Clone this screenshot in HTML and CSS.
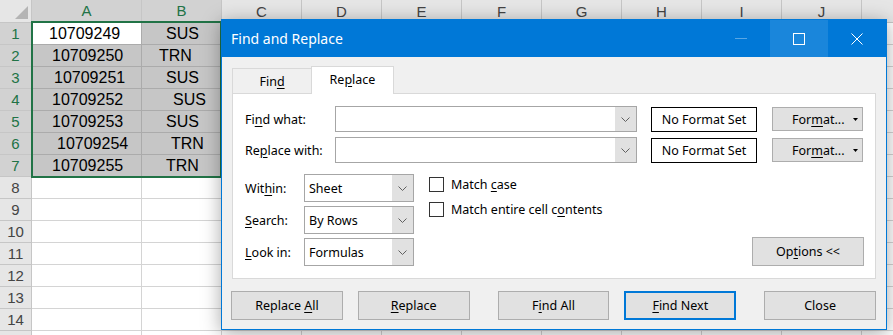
FILE: index.html
```html
<!DOCTYPE html>
<html lang="en">
<head>
  <meta charset="UTF-8" />
  <meta name="viewport" content="width=device-width, initial-scale=1.0" />
  <title>Find and Replace</title>
  <link rel="stylesheet" href="styles.css">
</head>
<body>
  <div class="sheet">
    <div class="hd corner"><svg width="13" height="13" viewBox="0 0 13 13"><path d="M0 13H13V0z" fill="#b4b4b4"/></svg></div>
    <div class="hd col sel">A</div><div class="hd col sel">B</div><div class="hd col">C</div><div class="hd col">D</div><div class="hd col">E</div><div class="hd col">F</div><div class="hd col">G</div><div class="hd col">H</div><div class="hd col">I</div><div class="hd col">J</div><div class="hd col"></div>

    <div class="hd row sel">1</div><div class="cell active i17">10709249</div><div class="cell sel i24">SUS</div><div class="cell"></div><div class="cell"></div><div class="cell"></div><div class="cell"></div><div class="cell"></div><div class="cell"></div><div class="cell"></div><div class="cell"></div><div class="cell"></div>
    <div class="hd row sel">2</div><div class="cell sel i20">10709250</div><div class="cell sel i17">TRN</div><div class="cell"></div><div class="cell"></div><div class="cell"></div><div class="cell"></div><div class="cell"></div><div class="cell"></div><div class="cell"></div><div class="cell"></div><div class="cell"></div>
    <div class="hd row sel">3</div><div class="cell sel i22">10709251</div><div class="cell sel i24">SUS</div><div class="cell"></div><div class="cell"></div><div class="cell"></div><div class="cell"></div><div class="cell"></div><div class="cell"></div><div class="cell"></div><div class="cell"></div><div class="cell"></div>
    <div class="hd row sel">4</div><div class="cell sel i20">10709252</div><div class="cell sel i31">SUS</div><div class="cell"></div><div class="cell"></div><div class="cell"></div><div class="cell"></div><div class="cell"></div><div class="cell"></div><div class="cell"></div><div class="cell"></div><div class="cell"></div>
    <div class="hd row sel">5</div><div class="cell sel i20">10709253</div><div class="cell sel i24">SUS</div><div class="cell"></div><div class="cell"></div><div class="cell"></div><div class="cell"></div><div class="cell"></div><div class="cell"></div><div class="cell"></div><div class="cell"></div><div class="cell"></div>
    <div class="hd row sel">6</div><div class="cell sel i25">10709254</div><div class="cell sel i29">TRN</div><div class="cell"></div><div class="cell"></div><div class="cell"></div><div class="cell"></div><div class="cell"></div><div class="cell"></div><div class="cell"></div><div class="cell"></div><div class="cell"></div>
    <div class="hd row sel">7</div><div class="cell sel i20">10709255</div><div class="cell sel i24">TRN</div><div class="cell"></div><div class="cell"></div><div class="cell"></div><div class="cell"></div><div class="cell"></div><div class="cell"></div><div class="cell"></div><div class="cell"></div><div class="cell"></div>
    <div class="hd row">8</div><div class="cell"></div><div class="cell"></div><div class="cell"></div><div class="cell"></div><div class="cell"></div><div class="cell"></div><div class="cell"></div><div class="cell"></div><div class="cell"></div><div class="cell"></div><div class="cell"></div>
    <div class="hd row">9</div><div class="cell"></div><div class="cell"></div><div class="cell"></div><div class="cell"></div><div class="cell"></div><div class="cell"></div><div class="cell"></div><div class="cell"></div><div class="cell"></div><div class="cell"></div><div class="cell"></div>
    <div class="hd row">10</div><div class="cell"></div><div class="cell"></div><div class="cell"></div><div class="cell"></div><div class="cell"></div><div class="cell"></div><div class="cell"></div><div class="cell"></div><div class="cell"></div><div class="cell"></div><div class="cell"></div>
    <div class="hd row">11</div><div class="cell"></div><div class="cell"></div><div class="cell"></div><div class="cell"></div><div class="cell"></div><div class="cell"></div><div class="cell"></div><div class="cell"></div><div class="cell"></div><div class="cell"></div><div class="cell"></div>
    <div class="hd row">12</div><div class="cell"></div><div class="cell"></div><div class="cell"></div><div class="cell"></div><div class="cell"></div><div class="cell"></div><div class="cell"></div><div class="cell"></div><div class="cell"></div><div class="cell"></div><div class="cell"></div>
    <div class="hd row">13</div><div class="cell"></div><div class="cell"></div><div class="cell"></div><div class="cell"></div><div class="cell"></div><div class="cell"></div><div class="cell"></div><div class="cell"></div><div class="cell"></div><div class="cell"></div><div class="cell"></div>
    <div class="hd row">14</div><div class="cell"></div><div class="cell"></div><div class="cell"></div><div class="cell"></div><div class="cell"></div><div class="cell"></div><div class="cell"></div><div class="cell"></div><div class="cell"></div><div class="cell"></div><div class="cell"></div>
    <div class="hd row"></div><div class="cell"></div><div class="cell"></div><div class="cell"></div><div class="cell"></div><div class="cell"></div><div class="cell"></div><div class="cell"></div><div class="cell"></div><div class="cell"></div><div class="cell"></div><div class="cell"></div>
  </div>

  <div class="selection"></div>

  <div class="dialog">
    <div class="titlebar">
      <span class="title">Find and Replace</span>
      <div class="winbtns">
        <span class="winbtn"><svg width="12" height="1"><rect width="12" height="1" fill="#fff" opacity=".35"/></svg></span>
        <span class="winbtn hover"><svg width="12" height="12" viewBox="0 0 12 12"><rect x=".5" y=".5" width="11" height="11" fill="none" stroke="#fff"/></svg></span>
        <span class="winbtn"><svg width="12" height="12" viewBox="0 0 12 12"><path d="M.5.5l11 11M11.5.5l-11 11" stroke="#fff" fill="none"/></svg></span>
      </div>
    </div>

    <div class="dlg-body">
      <div class="tabs">
        <span class="tab">Fin<u>d</u></span>
        <span class="tab active">Re<u>p</u>lace</span>
      </div>

      <div class="panel">
        <div class="field-row">
          <label class="field-label">Fi<u>n</u>d what:</label>
          <div class="combo wide">
            <span class="combo-value"></span>
            <span class="combo-btn"><svg width="9" height="5" viewBox="0 0 9 5"><path d="M.5.5l4 4 4-4" fill="none" stroke="#606060"/></svg></span>
          </div>
          <div class="fmt-preview">No Format Set</div>
          <button class="btn fmt-btn"><span>For<u>m</u>at...</span><svg class="caret" width="5" height="3" viewBox="0 0 5 3"><path d="M0 0h5L2.5 3z" fill="#000"/></svg></button>
        </div>
        <div class="field-row">
          <label class="field-label">Re<u>p</u>lace with:</label>
          <div class="combo wide">
            <span class="combo-value"></span>
            <span class="combo-btn"><svg width="9" height="5" viewBox="0 0 9 5"><path d="M.5.5l4 4 4-4" fill="none" stroke="#606060"/></svg></span>
          </div>
          <div class="fmt-preview">No Format Set</div>
          <button class="btn fmt-btn"><span>For<u>m</u>at...</span><svg class="caret" width="5" height="3" viewBox="0 0 5 3"><path d="M0 0h5L2.5 3z" fill="#000"/></svg></button>
        </div>

        <div class="options">
          <div class="selects">
            <div class="sel-row">
              <label class="sel-label">Wit<u>h</u>in:</label>
              <div class="combo small">
                <span class="combo-value">Sheet</span>
                <span class="combo-btn"><svg width="9" height="5" viewBox="0 0 9 5"><path d="M.5.5l4 4 4-4" fill="none" stroke="#606060"/></svg></span>
              </div>
            </div>
            <div class="sel-row">
              <label class="sel-label"><u>S</u>earch:</label>
              <div class="combo small">
                <span class="combo-value">By Rows</span>
                <span class="combo-btn"><svg width="9" height="5" viewBox="0 0 9 5"><path d="M.5.5l4 4 4-4" fill="none" stroke="#606060"/></svg></span>
              </div>
            </div>
            <div class="sel-row">
              <label class="sel-label"><u>L</u>ook in:</label>
              <div class="combo small">
                <span class="combo-value">Formulas</span>
                <span class="combo-btn"><svg width="9" height="5" viewBox="0 0 9 5"><path d="M.5.5l4 4 4-4" fill="none" stroke="#606060"/></svg></span>
              </div>
            </div>
          </div>

          <div class="checks">
            <label class="check"><span class="box"></span><span>Match <u>c</u>ase</span></label>
            <label class="check"><span class="box"></span><span>Match entire cell c<u>o</u>ntents</span></label>
          </div>

          <button class="btn options-btn">Op<u>t</u>ions &lt;&lt;</button>
        </div>
      </div>

      <div class="actions">
        <button class="btn action">Replace <u>A</u>ll</button>
        <button class="btn action"><u>R</u>eplace</button>
        <button class="btn action wide-gap">F<u>i</u>nd All</button>
        <button class="btn action default"><u>F</u>ind Next</button>
        <button class="btn action wide-gap">Close</button>
      </div>
    </div>
  </div>
</body>
</html>
```

FILE: styles.css
```css
body {
  margin: 0;
  width: 893px;
  height: 335px;
  overflow: hidden;
  position: relative;
  background: #fff;
  font-family: "Liberation Sans", Arial, sans-serif;
}

/* spreadsheet */
.sheet {
  display: grid;
  grid-template-columns: 32px 110px repeat(10, 80px);
  grid-template-rows: 23px;
  grid-auto-rows: 22px;
  width: 893px;
  height: 335px;
  overflow: hidden;
}
.sheet > div {
  box-sizing: border-box;
  border-right: 1px solid #d4d4d4;
  border-bottom: 1px solid #d4d4d4;
}
.hd {
  background: #e6e6e6;
  color: #444;
  font-size: 15px;
  display: flex;
  align-items: center;
  justify-content: center;
  border-color: #c6c6c6 !important;
}
.hd.sel {
  background: #d2d2d2;
  color: #217346;
}
.hd.col.sel {
  border-bottom: 2px solid #217346 !important;
}
.corner {
  align-items: flex-end;
  justify-content: flex-end;
  padding: 0 3px 3px 0;
}
.cell {
  font-size: 16px;
  line-height: 21px;
  color: #000;
  white-space: nowrap;
}
.cell.sel {
  background: #c6c6c6;
  border-color: #ababab;
}
.cell.active {
  background: #fff;
  border-color: #ababab;
}
.i17 { padding-left: 17px; }
.i20 { padding-left: 20px; }
.i22 { padding-left: 22px; }
.i24 { padding-left: 24px; }
.i25 { padding-left: 25px; }
.i29 { padding-left: 29px; }
.i31 { padding-left: 31px; }

.selection {
  position: absolute;
  left: 31px;
  top: 21px;
  width: 191px;
  height: 157px;
  box-sizing: border-box;
  border: 2px solid #217346;
}

/* dialog */
.dialog {
  position: absolute;
  left: 221px;
  top: 19px;
  width: 666px;
  height: 311px;
  box-sizing: border-box;
  border: 1px solid #0078d7;
  background: #f0f0f0;
  box-shadow: 0 3px 18px rgba(0, 0, 0, 0.35);
  display: flex;
  flex-direction: column;
  font-family: "Noto Sans", "Open Sans", sans-serif;
  font-size: 12.5px;
  color: #000;
}
.dialog u {
  text-underline-offset: 2px;
  text-decoration-thickness: 1px;
}
.titlebar {
  height: 37px;
  flex: none;
  background: #0078d7;
  color: #fff;
  display: flex;
  align-items: center;
}
.title {
  padding-left: 9px;
  font-size: 14px;
}
.winbtns {
  margin-left: auto;
  display: flex;
  height: 100%;
}
.winbtn {
  width: 58px;
  display: flex;
  align-items: center;
  justify-content: center;
}
.winbtn.hover {
  background: #1a86db;
}

.dlg-body {
  flex: 1;
  padding: 9px 10px 9px 10px;
  display: flex;
  flex-direction: column;
}
.tabs {
  display: flex;
  align-items: flex-end;
  height: 27px;
}
.tab {
  box-sizing: border-box;
  width: 79px;
  height: 25px;
  border: 1px solid #d9d9d9;
  border-bottom: none;
  border-right: none;
  display: flex;
  align-items: center;
  justify-content: center;
}
.tab.active {
  width: 83px;
  height: 28px;
  margin-bottom: -1px;
  background: #fff;
  border-right: 1px solid #d9d9d9;
  padding-bottom: 2px;
  position: relative;
  z-index: 1;
}

.panel {
  height: 186px;
  box-sizing: border-box;
  border: 1px solid #d9d9d9;
  background: #fff;
  padding: 12px 11px 11px 12px;
}
.field-row {
  display: flex;
  align-items: center;
  height: 26px;
  margin-bottom: 5px;
}
.field-label {
  width: 90px;
}
.combo {
  display: flex;
  box-sizing: border-box;
  border: 1px solid #a6a6a6;
  background: #fff;
}
.combo.wide {
  width: 302px;
  height: 26px;
}
.combo.small {
  width: 110px;
  height: 28px;
}
.combo-value {
  flex: 1;
  padding-left: 4px;
  display: flex;
  align-items: center;
}
.combo-btn {
  width: 21px;
  background: #e1e1e1;
  display: flex;
  align-items: center;
  justify-content: center;
}
.fmt-preview {
  box-sizing: border-box;
  width: 106px;
  height: 25px;
  margin-left: 14px;
  border: 1px solid #000;
  display: flex;
  align-items: center;
  justify-content: center;
}
.btn {
  box-sizing: border-box;
  font: inherit;
  color: #000;
  background: #e1e1e1;
  border: 1px solid #adadad;
  padding: 0;
}
.fmt-btn {
  width: 91px;
  height: 24px;
  margin-left: 15px;
  display: flex;
  align-items: center;
  padding-left: 19px;
}
.caret {
  margin-left: auto;
  margin-right: 4px;
}

.options {
  display: flex;
  margin-top: 11px;
}
.selects {
  display: flex;
  flex-direction: column;
  gap: 4px;
}
.sel-row {
  display: flex;
  align-items: center;
}
.sel-label {
  width: 59px;
}
.checks {
  margin-left: 15px;
  padding-top: 3px;
  display: flex;
  flex-direction: column;
  gap: 10px;
}
.check {
  display: flex;
  align-items: center;
  height: 15px;
}
.box {
  box-sizing: border-box;
  width: 15px;
  height: 15px;
  border: 1px solid #333;
  background: #fff;
  margin-right: 7px;
}
.options-btn {
  margin-left: auto;
  align-self: flex-end;
  width: 112px;
  height: 29px;
}

.actions {
  display: flex;
  gap: 15px;
  margin-top: 12px;
  margin-left: -1px;
}
.action {
  width: 112px;
  height: 29px;
}
.action.wide-gap {
  margin-left: 13px;
}
.action.default {
  border: 2px solid #0078d7;
}
```
